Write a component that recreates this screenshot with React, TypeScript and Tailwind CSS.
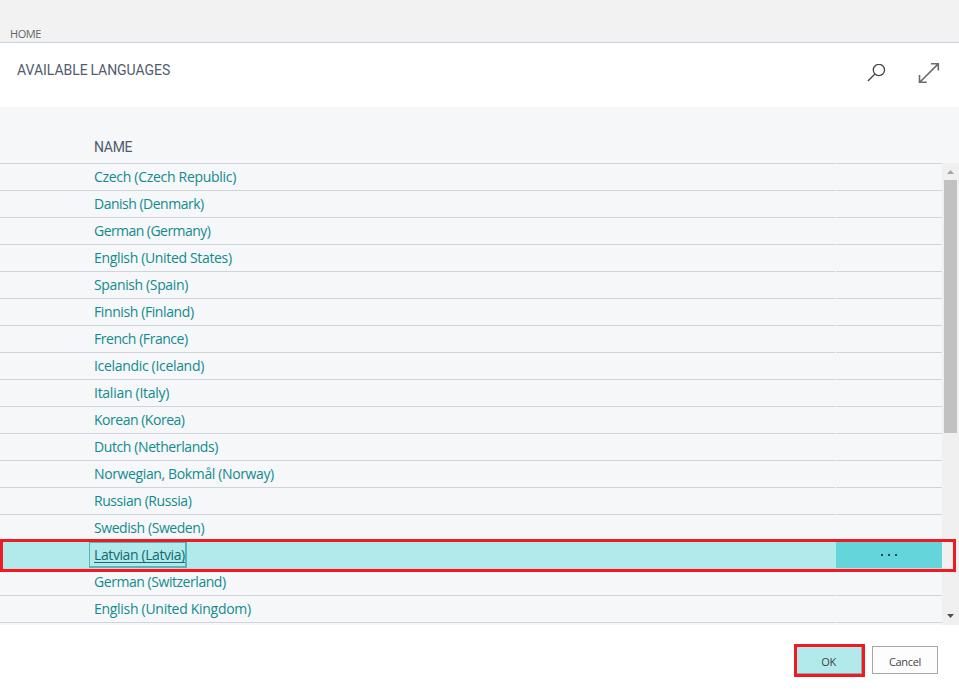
const languages: { name: string; spacing: string }[] = [
  { name: "Czech (Czech Republic)", spacing: "tracking-[-0.3px]" },
  { name: "Danish (Denmark)", spacing: "tracking-[-0.5px]" },
  { name: "German (Germany)", spacing: "tracking-[-0.55px]" },
  { name: "English (United States)", spacing: "tracking-[-0.34px]" },
  { name: "Spanish (Spain)", spacing: "tracking-[-0.37px]" },
  { name: "Finnish (Finland)", spacing: "tracking-[-0.4px]" },
  { name: "French (France)", spacing: "tracking-[-0.45px]" },
  { name: "Icelandic (Iceland)", spacing: "tracking-[-0.32px]" },
  { name: "Italian (Italy)", spacing: "tracking-[-0.27px]" },
  { name: "Korean (Korea)", spacing: "tracking-[-0.48px]" },
  { name: "Dutch (Netherlands)", spacing: "tracking-[-0.4px]" },
  { name: "Norwegian, Bokmål (Norway)", spacing: "tracking-[-0.37px]" },
  { name: "Russian (Russia)", spacing: "tracking-[-0.43px]" },
  { name: "Swedish (Sweden)", spacing: "tracking-[-0.43px]" },
  { name: "Latvian (Latvia)", spacing: "tracking-[-0.4px]" },
  { name: "German (Switzerland)", spacing: "tracking-[-0.45px]" },
  { name: "English (United Kingdom)", spacing: "tracking-[-0.29px]" },
];

const selected = "Latvian (Latvia)";

function SearchIcon() {
  return (
    <svg width="19" height="19" viewBox="0 0 19 19" fill="none" stroke="#444" strokeWidth="1.3">
      <circle cx="11.9" cy="6" r="5.6" />
      <path d="M7.7 10.2 L0.9 17" />
    </svg>
  );
}

function ExpandIcon() {
  return (
    <svg width="22" height="22" viewBox="0 0 22 22" fill="none" stroke="#6b6b6b" strokeWidth="1.6">
      <path d="M2 20 L20.2 1.9 M13 1.7 H20.3 V8.5 M1.5 13 V20.3 H8.7" />
    </svg>
  );
}

function Row({ name, spacing }: { name: string; spacing: string }) {
  const active = name === selected;
  return (
    <div className="flex h-[27px] shrink-0">
      <div className={`flex w-[835px] items-center border-b border-[#d0d4da] pl-[94px] ${active ? "bg-[#b2eaeb]" : ""}`}>
        <span
          className={
            active
              ? `-ml-[5px] h-[26px] w-[98px] border border-r-2 border-b-2 border-[#56b5ba] pl-1 leading-[24px] whitespace-nowrap text-[#0f6b70] underline underline-offset-2 ${spacing}`
              : `leading-[26px] whitespace-nowrap ${spacing}`
          }
        >
          {name}
        </span>
      </div>
      <div className={`ml-px flex flex-1 items-center justify-center gap-[5px] border-b border-[#d0d4da] ${active ? "bg-[#65d5dc] shadow-[-1px_0_0_#b2eaeb]" : ""}`}>
        {active && [0, 1, 2].map((dot) => <i key={dot} className="h-0.5 w-0.5 bg-[#264b50]" />)}
      </div>
    </div>
  );
}

export default function App() {
  return (
    <div className="relative flex h-[695px] w-[959px] flex-col overflow-hidden bg-white font-['Open_Sans','Noto_Sans',sans-serif]">
      <header className="flex h-[43px] shrink-0 items-end border-b border-[#c5cfdd] bg-[#f2f2f2] pl-[10px] text-[11px] leading-[17px] text-[#666]">
        <span className="tracking-[-0.4px]">HOME</span>
      </header>
      <div className="flex h-16 shrink-0 items-start justify-between pr-[19px] pl-[17px]">
        <h1 className="pt-[17px] font-[Roboto,sans-serif] text-[14px] leading-[20px] tracking-[-0.02px] [word-spacing:-0.8px] text-[#505c6d]">AVAILABLE LANGUAGES</h1>
        <div className="flex items-center gap-[32px] pt-[19px]">
          <SearchIcon />
          <ExpandIcon />
        </div>
      </div>
      <main className="flex h-[518px] shrink-0 flex-col bg-[#f5f7f9]">
        <div className="h-14 shrink-0 pt-[30px] pl-[94px] font-[Roboto,sans-serif] text-[14px] leading-[20px] tracking-[-0.3px] text-[#505c6d]">NAME</div>
        <div className="flex min-h-0 flex-1">
          <div className="flex w-[942px] flex-col text-[14px] text-[#128a8e]">
            <div className="flex h-px shrink-0 gap-px">
              <div className="w-[835px] bg-[#d0d4da]" />
              <div className="flex-1 bg-[#d0d4da]" />
            </div>
            {languages.map((language) => (
              <Row key={language.name} {...language} />
            ))}
          </div>
          <div className="flex w-[17px] flex-col items-center bg-[#f0f0f0]">
            <svg width="17" height="17" viewBox="0 0 17 17" fill="#a3a3a3">
              <path d="M5 11 L8.5 7 L12 11 Z" />
            </svg>
            <div className="h-[253px] w-[13px] bg-[#c1c1c1]" />
            <svg className="mt-auto" width="17" height="17" viewBox="0 0 17 17" fill="#505050">
              <path d="M5 6 L12 6 L8.5 10 Z" />
            </svg>
          </div>
        </div>
      </main>
      <footer className="flex flex-1 items-start justify-end gap-[7px] pt-[19px] pr-[21px] text-[11px] text-[#444]">
        <button className="h-[33px] w-[71px] border-3 border-[#ed1c24] bg-[#b2eaeb] pt-1 pr-0.5 tracking-[-0.3px] shadow-[inset_-1px_-1px_0_#9aa5a8]">OK</button>
        <button className="mt-[2px] h-[28px] w-[66px] border border-[#a6a6a6] bg-[#fdfdfd] pt-1 tracking-[-0.3px]">Cancel</button>
      </footer>
      <div className="pointer-events-none absolute top-[539px] left-0 h-[33px] w-[956px] border-3 border-[#ed1c24]" />
    </div>
  );
}
